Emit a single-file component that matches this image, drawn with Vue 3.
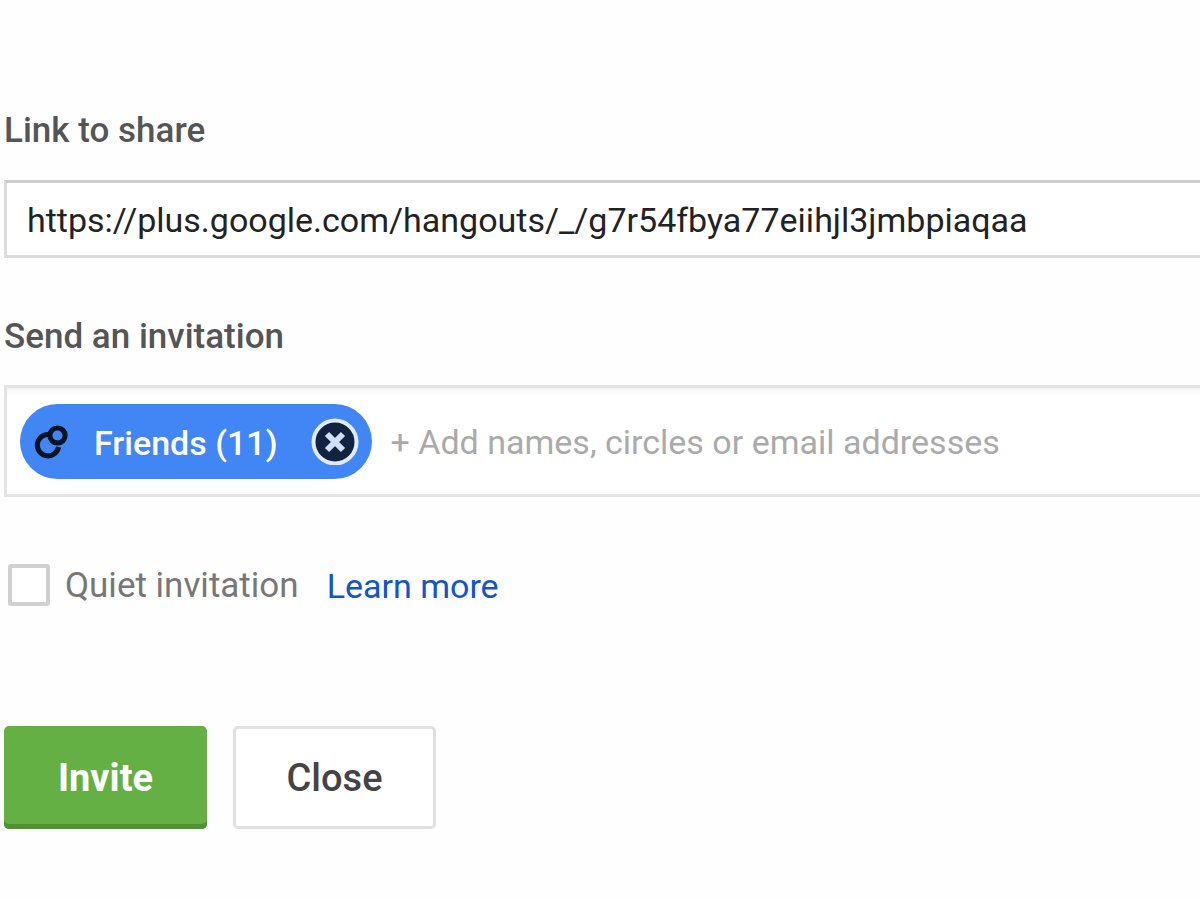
<script setup>
import { ref } from 'vue'

const link = ref('https://plus.google.com/hangouts/_/g7r54fbya77eiihjl3jmbpiaqaa')
const circles = ref([{ name: 'Friends', count: 11 }])
const query = ref('')
const quiet = ref(false)

function removeCircle(index) {
  circles.value.splice(index, 1)
}
</script>

<template>
  <form class="invite" @submit.prevent>
    <label class="heading" for="share-link">Link to share</label>
    <input id="share-link" v-model="link" class="link-box" type="text" readonly />

    <label class="heading" for="people">Send an invitation</label>
    <div class="people-box">
      <span v-for="(circle, i) in circles" :key="circle.name" class="chip">
        <svg class="chip-icon" viewBox="0 0 36 36" aria-hidden="true">
          <path d="M15 11.5A10.7 10.7 0 1 0 25.6 24" />
          <circle cx="24.5" cy="12.5" r="7.6" />
        </svg>
        <span class="chip-name">{{ circle.name }} ({{ circle.count }})</span>
        <button class="chip-remove" type="button" :aria-label="`Remove ${circle.name}`" @click="removeCircle(i)">
          <svg viewBox="0 0 48 48" aria-hidden="true">
            <circle cx="24" cy="25" r="21.5" />
            <path d="M16 17 32 33M32 17 16 33" />
          </svg>
        </button>
      </span>
      <input id="people" v-model="query" class="people-input" type="text" placeholder="+ Add names, circles or email addresses" />
    </div>

    <div class="options">
      <input id="quiet" v-model="quiet" class="check" type="checkbox" />
      <label class="quiet-label" for="quiet">Quiet invitation</label>
      <a class="learn" href="#">Learn more</a>
    </div>

    <div class="actions">
      <button class="btn primary" type="submit">Invite</button>
      <button class="btn plain" type="button">Close</button>
    </div>
  </form>
</template>

<style>
body {
  background: #fefefe;
  overflow-x: hidden;
}
</style>

<style scoped>
.invite {
  display: flex;
  flex-direction: column;
  padding: 109px 0 72px 4px;
  font-family: Roboto, "Liberation Sans", sans-serif;
  font-size: 34px;
  color: #555;
}

.invite * {
  box-sizing: border-box;
}

input,
button {
  font: inherit;
}

.heading {
  font-size: 35px;
  line-height: 44px;
  font-weight: 500;
}

.link-box {
  height: 78px;
  margin: 27px 0 57px;
  padding: 2px 20px 0;
  border: 3px solid #dcdcdc;
  border-top-color: #ccc;
  border-right: 0;
  border-radius: 0;
  background: #fff;
  color: #222;
  outline: 0;
}

.people-box {
  display: flex;
  align-items: center;
  gap: 19px;
  min-height: 112px;
  margin-top: 26px;
  padding: 0 0 0 13px;
  border: 3px solid #e4e4e4;
  border-right: 0;
  background: linear-gradient(#f4f4f4, #fff 8px);
}

.chip {
  display: flex;
  align-items: center;
  height: 75px;
  padding: 0 13px;
  border-radius: 38px;
  background: #4285f4;
  color: #fff;
  font-weight: 500;
}

.chip-icon {
  width: 36px;
  height: 36px;
  fill: none;
  stroke: #0a1322;
  stroke-width: 5;
}

.chip-name {
  padding: 4px 33px 0 25px;
  white-space: nowrap;
}

.chip-remove {
  width: 48px;
  height: 48px;
  padding: 0;
  border: 0;
  background: none;
}

.chip-remove svg {
  display: block;
  width: 48px;
  height: 48px;
  fill: #12233f;
  stroke: #dfeaff;
  stroke-width: 4;
}

.chip-remove path {
  stroke: #cfe0ff;
  stroke-width: 6;
}

.people-input {
  flex: 1;
  min-width: 0;
  padding: 2px 0 0;
  border: 0;
  background: none;
  color: #222;
  outline: 0;
}

.people-input::placeholder {
  color: #aaa;
  opacity: 1;
}

.options {
  display: flex;
  align-items: center;
  margin: 65px 0 0 4px;
  line-height: 44px;
}

.check {
  appearance: none;
  width: 42px;
  height: 42px;
  margin: 0 15px 0 0;
  border: 4px solid #d0d0d0;
  border-radius: 3px;
  background: #fff;
}

.quiet-label {
  padding-top: 2px;
  font-size: 35px;
  color: #777;
}

.learn {
  margin-left: 28px;
  padding-top: 2px;
  color: #15c;
  text-decoration: none;
}

.actions {
  display: flex;
  gap: 26px;
  margin-top: 118px;
}

.btn {
  min-width: 203px;
  height: 103px;
  padding: 0 24px;
  border-radius: 5px;
  font-size: 38px;
}

.primary {
  border: 0;
  background: #65b045;
  box-shadow: inset 0 -5px #4f9134;
  color: #fff;
  font-weight: 700;
}

.plain {
  border: 3px solid #e0e0e0;
  background: #fff;
  color: #444;
  font-weight: 500;
}
</style>
